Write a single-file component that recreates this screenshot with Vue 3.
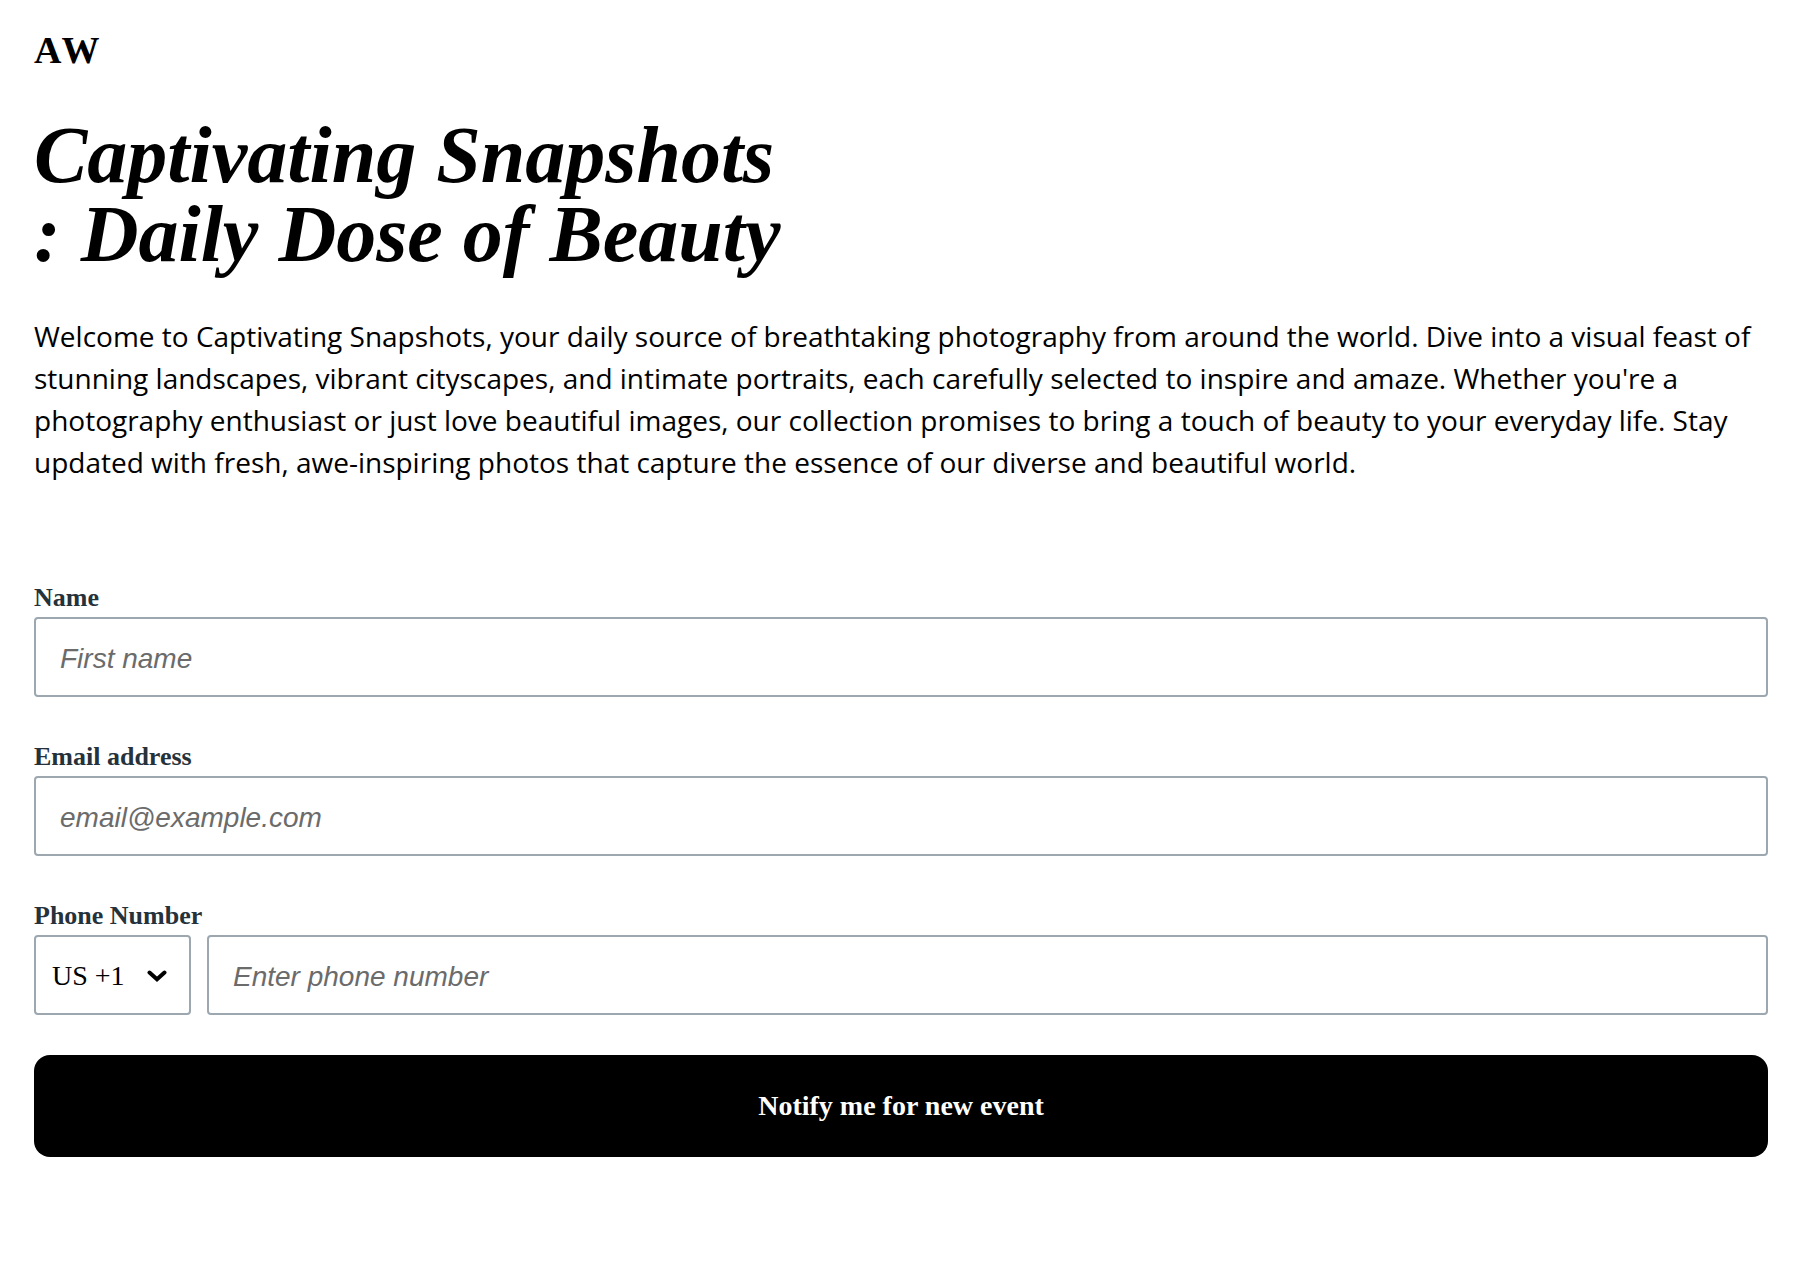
<script setup>
import { ref } from 'vue'

const name = ref('')
const email = ref('')
const phone = ref('')
const country = ref('US')
</script>

<template>
  <main class="page">
    <header class="brand">AW</header>
    <h1 class="title">Captivating Snapshots<br />: Daily Dose of Beauty</h1>
    <p class="intro">
      Welcome to Captivating Snapshots, your daily source of breathtaking photography from around
      the world. Dive into a visual feast of stunning landscapes, vibrant cityscapes, and intimate
      portraits, each carefully selected to inspire and amaze. Whether you're a photography
      enthusiast or just love beautiful images, our collection promises to bring a touch of beauty
      to your everyday life. Stay updated with fresh, awe-inspiring photos that capture the essence
      of our diverse and beautiful world.
    </p>

    <form class="form" @submit.prevent>
      <div class="field">
        <label class="label" for="name">Name</label>
        <input id="name" v-model="name" class="control" type="text" placeholder="First name" />
      </div>
      <div class="field">
        <label class="label" for="email">Email address</label>
        <input
          id="email"
          v-model="email"
          class="control"
          type="email"
          placeholder="email@example.com"
        />
      </div>
      <div class="field">
        <label class="label" for="phone">Phone Number</label>
        <div class="phone-row">
          <div class="country">
            <select v-model="country" class="select" aria-label="Country code">
              <option value="US">US +1</option>
            </select>
            <svg class="chevron" viewBox="0 0 20 12" aria-hidden="true">
              <path d="M2.5 2.5 10 9.2 17.5 2.5" />
            </svg>
          </div>
          <input
            id="phone"
            v-model="phone"
            class="control"
            type="tel"
            placeholder="Enter phone number"
          />
        </div>
      </div>
      <button class="submit" type="submit">Notify me for new event</button>
    </form>
  </main>
</template>

<style>
body {
  background: #fff;
}
</style>

<style scoped>
.page {
  padding: 30px 32px 32px 34px;
  color: #000;
  font-family: 'Liberation Serif', 'Times New Roman', serif;
}

.brand {
  font-size: 38px;
  font-weight: 700;
  font-kerning: none;
  line-height: 40px;
}

.title {
  margin: 46px 0 0;
  font-size: 80px;
  font-style: italic;
  font-weight: 700;
  line-height: 79px;
}

.intro {
  margin: 41px 0 0;
  font-family: 'Open Sans', 'Noto Sans', sans-serif;
  font-size: 28px;
  line-height: 42px;
}

.form {
  display: flex;
  flex-direction: column;
  gap: 40px;
  margin-top: 95px;
}

.field {
  display: flex;
  flex-direction: column;
}

.label {
  color: #26323b;
  font-size: 26px;
  font-weight: 700;
  line-height: 39px;
}

.control,
.select {
  box-sizing: border-box;
  width: 100%;
  height: 80px;
  margin: 0;
  border: 2px solid #9ca7af;
  border-radius: 4px;
  background: #fff;
}

.control {
  padding: 3px 24px 0;
  font-family: 'Liberation Sans', Arial, sans-serif;
  font-size: 28px;
}

.control::placeholder {
  color: #6b6b6b;
  font-style: italic;
}

.phone-row {
  display: flex;
  gap: 16px;
}

.country {
  position: relative;
  flex: 0 0 157px;
}

.select {
  padding: 0 48px 0 16px;
  appearance: none;
  color: #000;
  font-family: inherit;
  font-size: 28px;
}

.chevron {
  position: absolute;
  top: 35px;
  right: 24px;
  width: 20px;
  height: 12px;
  fill: none;
  stroke: #000;
  stroke-width: 4;
  stroke-linecap: round;
  pointer-events: none;
}

.submit {
  height: 102px;
  border: 0;
  border-radius: 16px;
  background: #000;
  color: #fff;
  font-family: inherit;
  font-size: 28px;
  font-weight: 700;
}
</style>
